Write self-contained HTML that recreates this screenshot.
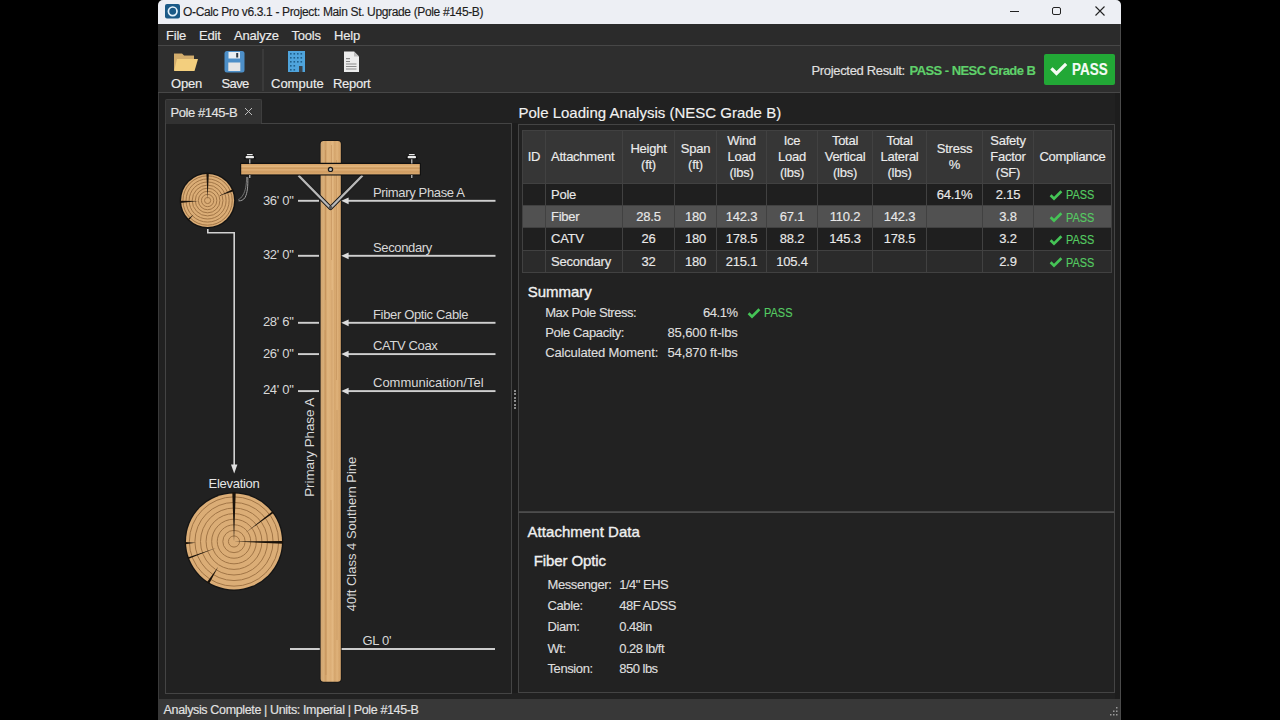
<!DOCTYPE html>
<html><head><meta charset="utf-8">
<style>
html,body{margin:0;padding:0;background:#000;width:1280px;height:720px;overflow:hidden;}
body{position:relative;font-family:"Liberation Sans",sans-serif;color:#e6e6e6;-webkit-text-stroke:0.15px currentColor;}
.a{position:absolute;}
.t{position:absolute;white-space:nowrap;line-height:1;}
.menu{font-size:13px;color:#ececec;letter-spacing:-0.2px;}
.tb{font-size:13px;color:#ececec;}
.cell{display:flex;align-items:center;text-align:center;font-size:13px;line-height:15.7px;color:#e8e8e8;box-sizing:border-box;white-space:nowrap;letter-spacing:-0.25px;}
.hd{background:#363636;color:#ececec;}
.sb{-webkit-text-stroke:0.35px currentColor;}
.sh{font-size:15px;color:#f0f0f0;}
.sm{font-size:13px;color:#dedede;}
.grn{color:#55cb62;}
</style></head><body>
<div class="a" style="left:158px;top:0px;width:963px;height:720px;background:#212121;border-top-left-radius:5px;border-top-right-radius:5px;"></div>
<div class="a" style="left:158px;top:0px;width:963px;height:24px;background:#edeff4;border-top-left-radius:5px;border-top-right-radius:5px;"></div>
<svg class="a" style="left:165px;top:4px" width="15" height="15" viewBox="0 0 15 15"><rect x="0" y="0" width="15" height="14.5" rx="2" fill="#1b5a87"/><circle cx="7.7" cy="7.3" r="4.3" fill="none" stroke="#e6f3fc" stroke-width="1.7"/></svg>
<div class="t " style="left:183px;top:5.84px;font-size:12px;color:#1d1d1d;letter-spacing:-0.35px;">O-Calc Pro v6.3.1 - Project: Main St. Upgrade (Pole #145-B)</div>
<div class="a" style="left:1010px;top:10.6px;width:9.2px;height:1.2px;background:#222;"></div>
<div class="a" style="left:1052px;top:6.5px;width:6.6px;height:6.6px;border:1.6px solid #222;border-radius:2px;"></div>
<svg class="a" style="left:1094px;top:5px" width="12" height="12"><path d="M1.5 1.5L10.5 10.5M10.5 1.5L1.5 10.5" stroke="#222" stroke-width="1.1"/></svg>
<div class="a" style="left:158px;top:24px;width:963px;height:21px;background:#2b2b2b;"></div>
<div class="t menu" style="left:166px;top:29.00px;font-size:13px;">File</div>
<div class="t menu" style="left:199px;top:29.00px;font-size:13px;">Edit</div>
<div class="t menu" style="left:234px;top:29.00px;font-size:13px;">Analyze</div>
<div class="t menu" style="left:291.5px;top:29.00px;font-size:13px;">Tools</div>
<div class="t menu" style="left:334px;top:29.00px;font-size:13px;">Help</div>
<div class="a" style="left:158px;top:45px;width:963px;height:48px;background:#2e2e2e;border-top:1px solid #474747;border-bottom:1px solid #474747;box-sizing:border-box;"></div>
<div class="a" style="left:158px;top:699px;width:963px;height:21px;background:#383838;"></div>
<div class="a" style="left:158px;top:93px;width:1px;height:607px;background:#3a3a3a;"></div>
<div class="a" style="left:165px;top:99px;width:95px;height:24px;background:#323232;border:1px solid #3e3e3e;border-bottom:none;border-radius:2px 2px 0 0;"></div>
<div class="t " style="left:170.5px;top:106.20px;font-size:13px;color:#e4e4e4;letter-spacing:-0.45px;">Pole #145-B</div>
<svg class="a" style="left:243px;top:106px" width="11" height="11"><path d="M2 2L9 9M9 2L2 9" stroke="#bdbdbd" stroke-width="1"/></svg>
<div class="a" style="left:165px;top:123px;width:345px;height:569px;background:#212121;border:1px solid #444;"></div>
<div class="a" style="left:166px;top:123px;width:95px;height:1px;background:#323232;"></div>
<div class="a" style="left:512px;top:123px;width:6px;height:570px;background:#1c1c1c;"></div>
<div class="a" style="left:514px;top:390px;width:2px;height:20px;background:repeating-linear-gradient(#8a8a8a 0 2px,transparent 2px 3.5px);"></div>
<div class="t " style="left:518.5px;top:105.30px;font-size:15px;color:#f2f2f2;">Pole Loading Analysis (NESC Grade B)</div>
<div class="a" style="left:518px;top:124px;width:597px;height:388px;background:#222222;border:1px solid #444;box-sizing:border-box;"></div>
<div class="a" style="left:518px;top:512px;width:597px;height:181px;background:#222222;border:1px solid #444;border-top:1.5px solid #4d4d4d;box-sizing:border-box;"></div>
<div class="a" style="left:1115px;top:93px;width:5px;height:606px;background:#1d1d1d;"></div>
<div class="a" style="left:1120px;top:24px;width:1px;height:696px;background:#4a4a4a;"></div>
<svg class="a" style="left:170px;top:49px" width="32" height="26" viewBox="0 0 32 26">
  <path d="M4 4.5 h8 l2 2 h10 v3 H4z" fill="#c9a466"/>
  <path d="M4 5 h8 l2 2 h10 v14 H4z" fill="#d3ad6c"/>
  <path d="M7 10 h21 l-3.5 12 H4z" fill="#f3cf7e"/>
</svg>
<svg class="a" style="left:223px;top:49px" width="24" height="26" viewBox="0 0 24 26">
  <rect x="1.5" y="2" width="20" height="21.5" rx="2.5" fill="#4d8fc8"/>
  <rect x="5.5" y="3" width="11.5" height="6.5" fill="#e9eef2"/>
  <rect x="13.2" y="4" width="2" height="4.5" fill="#2f3a44"/>
  <rect x="5.3" y="13.5" width="12" height="8.5" fill="#e6e6e6"/>
</svg>
<svg class="a" style="left:286px;top:49px" width="22" height="26" viewBox="0 0 22 26">
  <rect x="2" y="2" width="17" height="21" fill="#4fa4dc"/>
  <g fill="#1f5f8c"><rect x="4.0" y="4" width="1.6" height="1.6"/><rect x="7.5" y="4" width="1.6" height="1.6"/><rect x="11.0" y="4" width="1.6" height="1.6"/><rect x="14.5" y="4" width="1.6" height="1.6"/><rect x="4.0" y="8" width="1.6" height="1.6"/><rect x="7.5" y="8" width="1.6" height="1.6"/><rect x="11.0" y="8" width="1.6" height="1.6"/><rect x="14.5" y="8" width="1.6" height="1.6"/><rect x="4.0" y="12" width="1.6" height="1.6"/><rect x="7.5" y="12" width="1.6" height="1.6"/><rect x="11.0" y="12" width="1.6" height="1.6"/><rect x="14.5" y="12" width="1.6" height="1.6"/><rect x="4.0" y="16" width="1.6" height="1.6"/><rect x="7.5" y="16" width="1.6" height="1.6"/><rect x="4.0" y="20" width="1.6" height="1.6"/><rect x="7.5" y="20" width="1.6" height="1.6"/></g>
  <rect x="13" y="17" width="3.5" height="6" fill="#39434c"/>
</svg>
<svg class="a" style="left:341px;top:49px" width="20" height="26" viewBox="0 0 20 26">
  <path d="M3 2.5 h10 l5 5 V23 H3z" fill="#ececec"/>
  <path d="M13 2.5 v5 h5z" fill="#bdbdbd"/>
  <g fill="#8a8a8a"><rect x="5" y="9" width="4" height="1.2"/><rect x="5" y="12" width="4" height="1"/><rect x="5" y="14.5" width="10.5" height="1"/><rect x="5" y="17" width="10.5" height="1"/><rect x="5" y="19.5" width="10.5" height="1"/></g>
</svg>
<div class="a" style="left:262px;top:49px;width:2px;height:42px;background:#3a3a3a;"></div>
<div class="t tb" style="left:171px;top:77.00px;font-size:13px;letter-spacing:-0.2px;">Open</div>
<div class="t tb" style="left:221.5px;top:77.00px;font-size:13px;letter-spacing:-0.6px;">Save</div>
<div class="t tb" style="left:271px;top:77.00px;font-size:13px;">Compute</div>
<div class="t tb" style="left:333px;top:77.00px;font-size:13px;letter-spacing:-0.3px;">Report</div>
<div class="t " style="left:811.5px;top:63.70px;font-size:13px;color:#e0e0e0;letter-spacing:-0.33px;">Projected Result:</div>
<div class="t " style="left:909.5px;top:63.70px;font-size:13px;color:#5fd06a;letter-spacing:-0.55px;font-weight:bold;">PASS - NESC Grade B</div>
<div class="a" style="left:1044px;top:54px;width:71px;height:31px;background:#22a836;border-radius:2px;"></div>
<svg class="a" style="left:1050px;top:62px" width="18" height="15" viewBox="0 0 18 15"><path d="M2.5 7.5 L6.5 11.5 L15 3" fill="none" stroke="#f4fbf4" stroke-width="3.2" stroke-linecap="square"/></svg>
<div class="t " style="left:1071.5px;top:61.86px;font-size:16px;color:#f4fbf4;font-weight:bold;transform:scaleX(0.84);transform-origin:left top;">PASS</div>

<svg class="a" style="left:0;top:0" width="1280" height="720" viewBox="0 0 1280 720">
<defs>
<linearGradient id="pg" x1="0" x2="1" y1="0" y2="0">
 <stop offset="0" stop-color="#cfa470"/><stop offset="0.15" stop-color="#d8ae78"/><stop offset="0.25" stop-color="#cf9f66"/>
 <stop offset="0.35" stop-color="#e0b57e"/><stop offset="0.5" stop-color="#dcae76"/><stop offset="0.6" stop-color="#e3b882"/>
 <stop offset="0.7" stop-color="#d4a46b"/><stop offset="0.82" stop-color="#dfb27a"/><stop offset="0.92" stop-color="#d5a56c"/><stop offset="1" stop-color="#dcab72"/>
</linearGradient>
<linearGradient id="cg" x1="0" x2="0" y1="0" y2="1">
 <stop offset="0" stop-color="#d39f64"/><stop offset="0.25" stop-color="#e2b57c"/><stop offset="0.4" stop-color="#c99559"/>
 <stop offset="0.55" stop-color="#dfb078"/><stop offset="0.75" stop-color="#cf9b60"/><stop offset="1" stop-color="#dcab70"/>
</linearGradient>
</defs>
<circle cx="207.6" cy="200.5" r="28.0" fill="#141414"/>
<circle cx="207.6" cy="200.5" r="26.5" fill="#dbad76"/>
<circle cx="207.6" cy="200.5" r="3.08" fill="none" stroke="#a17546" stroke-width="1.0"/>
<circle cx="207.6" cy="200.5" r="6.16" fill="none" stroke="#a17546" stroke-width="1.0"/>
<circle cx="207.6" cy="200.5" r="9.24" fill="none" stroke="#a17546" stroke-width="1.0"/>
<circle cx="207.6" cy="200.5" r="12.33" fill="none" stroke="#a17546" stroke-width="1.0"/>
<circle cx="207.6" cy="200.5" r="15.41" fill="none" stroke="#a17546" stroke-width="1.0"/>
<circle cx="207.6" cy="200.5" r="18.49" fill="none" stroke="#a17546" stroke-width="1.0"/>
<circle cx="207.6" cy="200.5" r="21.57" fill="none" stroke="#a17546" stroke-width="1.0"/>
<circle cx="207.6" cy="200.5" r="24.65" fill="none" stroke="#a17546" stroke-width="1.0"/>
<path d="M207.60 199.18 L208.80 173.00 L206.40 173.00Z" fill="#1a120a"/>
<path d="M218.66 196.03 L233.47 191.13 L232.72 189.27Z" fill="#1a120a"/>
<path d="M198.34 200.99 L180.08 200.84 L180.20 203.04Z" fill="#1a120a"/>
<path d="M193.55 214.55 L187.52 219.31 L188.79 220.58Z" fill="#1a120a"/>
<path d="M247.8 177 C248 186 247.5 193 245 197.5 C243.5 200 241 201 238.5 200.8" fill="none" stroke="#a0a0a0" stroke-width="1"/>
<path d="M246.6 177 C246.5 185 245.5 191 243 195 C241.5 197.5 240 199 238.3 199.5" fill="none" stroke="#8a8a8a" stroke-width="0.8"/>
<path d="M207.8 229 V232.8 H234.2 V466" fill="none" stroke="#d2d2d2" stroke-width="1.6"/>
<path d="M231 464.5 L237.4 464.5 L234.2 473.5Z" fill="#e0e0e0"/>
<text x="234" y="487.5" font-size="13" fill="#e6e6e6" text-anchor="middle" font-family="Liberation Sans" letter-spacing="-0.3">Elevation</text>
<circle cx="234" cy="541.5" r="49.3" fill="#141414"/>
<circle cx="234" cy="541.5" r="48" fill="#dbad76"/>
<circle cx="234" cy="541.5" r="5.58" fill="none" stroke="#a17546" stroke-width="1.0"/>
<circle cx="234" cy="541.5" r="11.16" fill="none" stroke="#a17546" stroke-width="1.0"/>
<circle cx="234" cy="541.5" r="16.74" fill="none" stroke="#a17546" stroke-width="1.0"/>
<circle cx="234" cy="541.5" r="22.33" fill="none" stroke="#a17546" stroke-width="1.0"/>
<circle cx="234" cy="541.5" r="27.91" fill="none" stroke="#a17546" stroke-width="1.0"/>
<circle cx="234" cy="541.5" r="33.49" fill="none" stroke="#a17546" stroke-width="1.0"/>
<circle cx="234" cy="541.5" r="39.07" fill="none" stroke="#a17546" stroke-width="1.0"/>
<circle cx="234" cy="541.5" r="44.65" fill="none" stroke="#a17546" stroke-width="1.0"/>
<path d="M234.00 541.50 L235.70 492.50 L232.30 492.50Z" fill="#1a120a"/>
<path d="M245.50 532.83 L273.67 512.73 L272.59 511.29Z" fill="#1a120a"/>
<path d="M234.00 541.50 L282.97 543.65 L283.02 541.06Z" fill="#1a120a"/>
<path d="M195.62 542.84 L184.99 542.11 L185.07 544.31Z" fill="#1a120a"/>
<path d="M215.96 548.07 L187.72 557.60 L188.19 558.92Z" fill="#1a120a"/>
<path d="M218.23 566.74 L206.93 582.37 L209.14 583.74Z" fill="#1a120a"/>
<rect x="290" y="648" width="205" height="2" fill="#cdcdcd"/>
<rect x="319.8" y="140.2" width="21.8" height="542.4" rx="3.5" fill="#141414"/>
<rect x="320.6" y="141" width="20.2" height="540.8" rx="3" fill="url(#pg)"/>
<g stroke="#b98550" stroke-width="0.8" opacity="0.55" fill="none">
<path d="M325.5 150 V300 M325 330 V520 M326 560 V675"/>
<path d="M331.5 145 V260 M332 290 V470 M331 500 V600"/>
<path d="M336.5 160 V380 M337 410 V640"/>
</g>
<path d="M298.5 175.5 L330.5 208 L362.5 175.5" fill="none" stroke="#1a1a1a" stroke-width="4.2" stroke-linejoin="round"/>
<path d="M298.5 175.5 L330.5 208 L362.5 175.5" fill="none" stroke="#b8b8b8" stroke-width="2.4" stroke-linejoin="round"/>
<circle cx="330.5" cy="207.5" r="1.8" fill="#555"/>
<rect x="240" y="162.8" width="181" height="12.8" rx="1.2" fill="#111"/>
<rect x="241.2" y="164" width="178.6" height="10.4" fill="url(#cg)"/>
<circle cx="330.5" cy="169.4" r="2.7" fill="#1a1a1a"/>
<circle cx="330.5" cy="169.4" r="1.5" fill="#bdbdbd"/>
<rect x="248.5" y="158.5" width="2.6" height="5" fill="#151515"/>
<rect x="249.20000000000002" y="158.5" width="1.2" height="5" fill="#cfcfcf"/>
<path d="M243.5 159.2 L245.8 154.5 Q249.8 152.3 253.8 154.5 L256.1 159.2Z" fill="#141414"/>
<rect x="246.8" y="154" width="6" height="1.3" rx="0.6" fill="#e8e8e8"/>
<rect x="245.60000000000002" y="156.1" width="8.4" height="2.1" rx="0.8" fill="#ececec"/>
<rect x="248.60000000000002" y="175" width="2.4" height="3.6" rx="1" fill="#141414"/>
<rect x="249.20000000000002" y="175" width="1.2" height="3" fill="#cfcfcf"/>
<rect x="410.5" y="158.5" width="2.6" height="5" fill="#151515"/>
<rect x="411.2" y="158.5" width="1.2" height="5" fill="#cfcfcf"/>
<path d="M405.5 159.2 L407.8 154.5 Q411.8 152.3 415.8 154.5 L418.1 159.2Z" fill="#141414"/>
<rect x="408.8" y="154" width="6" height="1.3" rx="0.6" fill="#e8e8e8"/>
<rect x="407.6" y="156.1" width="8.4" height="2.1" rx="0.8" fill="#ececec"/>
<rect x="410.6" y="175" width="2.4" height="3.6" rx="1" fill="#141414"/>
<rect x="411.2" y="175" width="1.2" height="3" fill="#cfcfcf"/>
<g fill="#d8d8d8" font-family="Liberation Sans" font-size="13">
<rect x="298" y="199.85" width="21" height="1.9" fill="#cfcfcf"/>
<rect x="346" y="199.85" width="149.5" height="1.9" fill="#cfcfcf"/>
<path d="M341.3 200.80 L348.6 197.40 L348.6 204.20Z" fill="#dcdcdc"/>
<text x="293.5" y="205.2" text-anchor="end" letter-spacing="-0.3">36' 0&quot;</text>
<text x="373" y="197.3" letter-spacing="-0.35">Primary Phase A</text>
<rect x="298" y="254.85" width="21" height="1.9" fill="#cfcfcf"/>
<rect x="346" y="254.85" width="149.5" height="1.9" fill="#cfcfcf"/>
<path d="M341.3 255.80 L348.6 252.40 L348.6 259.20Z" fill="#dcdcdc"/>
<text x="293.5" y="259.0" text-anchor="end" letter-spacing="-0.3">32' 0&quot;</text>
<text x="373" y="251.8" letter-spacing="-0.35">Secondary</text>
<rect x="298" y="321.85" width="21" height="1.9" fill="#cfcfcf"/>
<rect x="346" y="321.85" width="149.5" height="1.9" fill="#cfcfcf"/>
<path d="M341.3 322.80 L348.6 319.40 L348.6 326.20Z" fill="#dcdcdc"/>
<text x="293.5" y="325.9" text-anchor="end" letter-spacing="-0.3">28' 6&quot;</text>
<text x="373" y="319.2" letter-spacing="-0.35">Fiber Optic Cable</text>
<rect x="298" y="353.15" width="21" height="1.9" fill="#cfcfcf"/>
<rect x="346" y="353.15" width="149.5" height="1.9" fill="#cfcfcf"/>
<path d="M341.3 354.10 L348.6 350.70 L348.6 357.50Z" fill="#dcdcdc"/>
<text x="293.5" y="357.6" text-anchor="end" letter-spacing="-0.3">26' 0&quot;</text>
<text x="373" y="350.3" letter-spacing="-0.35">CATV Coax</text>
<rect x="298" y="390.15" width="21" height="1.9" fill="#cfcfcf"/>
<rect x="346" y="390.15" width="149.5" height="1.9" fill="#cfcfcf"/>
<path d="M341.3 391.10 L348.6 387.70 L348.6 394.50Z" fill="#dcdcdc"/>
<text x="293.5" y="393.5" text-anchor="end" letter-spacing="-0.3">24' 0&quot;</text>
<text x="373" y="387.0" letter-spacing="0">Communication/Tel</text>

<text x="362.5" y="645.3" letter-spacing="-0.3">GL 0'</text>
<text transform="translate(314 447.3) rotate(-90)" text-anchor="middle" font-size="13.5" letter-spacing="-0.1">Primary Phase A</text>
<text transform="translate(356 534) rotate(-90)" text-anchor="middle" letter-spacing="0">40ft Class 4 Southern Pine</text>
</g>
</svg>

<div class="a" style="left:522px;top:130px;width:590px;height:143px;background:#414141;"></div>
<div class="a cell hd" style="left:523px;top:131px;width:22px;height:52px;justify-content:center;">ID</div>
<div class="a cell hd" style="left:546px;top:131px;width:76px;height:52px;justify-content:flex-start;padding-left:5px;">Attachment</div>
<div class="a cell hd" style="left:623px;top:131px;width:51px;height:52px;justify-content:center;">Height<br>(ft)</div>
<div class="a cell hd" style="left:675px;top:131px;width:41px;height:52px;justify-content:center;">Span<br>(ft)</div>
<div class="a cell hd" style="left:717px;top:131px;width:49px;height:52px;justify-content:center;">Wind<br>Load<br>(lbs)</div>
<div class="a cell hd" style="left:767px;top:131px;width:50px;height:52px;justify-content:center;">Ice<br>Load<br>(lbs)</div>
<div class="a cell hd" style="left:818px;top:131px;width:54px;height:52px;justify-content:center;">Total<br>Vertical<br>(lbs)</div>
<div class="a cell hd" style="left:873px;top:131px;width:53px;height:52px;justify-content:center;">Total<br>Lateral<br>(lbs)</div>
<div class="a cell hd" style="left:927px;top:131px;width:55px;height:52px;justify-content:center;">Stress<br>%</div>
<div class="a cell hd" style="left:983px;top:131px;width:50px;height:52px;justify-content:center;">Safety<br>Factor<br>(SF)</div>
<div class="a cell hd" style="left:1034px;top:131px;width:77px;height:52px;justify-content:center;">Compliance</div>
<div class="a cell" style="left:523px;top:184px;width:22px;height:21px;background:#1f1f1f;justify-content:center;"></div>
<div class="a cell" style="left:546px;top:184px;width:76px;height:21px;background:#1f1f1f;justify-content:flex-start;padding-left:5px;">Pole</div>
<div class="a cell" style="left:623px;top:184px;width:51px;height:21px;background:#1f1f1f;justify-content:center;"></div>
<div class="a cell" style="left:675px;top:184px;width:41px;height:21px;background:#1f1f1f;justify-content:center;"></div>
<div class="a cell" style="left:717px;top:184px;width:49px;height:21px;background:#1f1f1f;justify-content:center;"></div>
<div class="a cell" style="left:767px;top:184px;width:50px;height:21px;background:#1f1f1f;justify-content:center;"></div>
<div class="a cell" style="left:818px;top:184px;width:54px;height:21px;background:#1f1f1f;justify-content:center;"></div>
<div class="a cell" style="left:873px;top:184px;width:53px;height:21px;background:#1f1f1f;justify-content:center;"></div>
<div class="a cell" style="left:927px;top:184px;width:55px;height:21px;background:#1f1f1f;justify-content:center;">64.1%</div>
<div class="a cell" style="left:983px;top:184px;width:50px;height:21px;background:#1f1f1f;justify-content:center;">2.15</div>
<div class="a cell" style="left:1034px;top:184px;width:77px;height:21px;background:#1f1f1f;justify-content:center;"></div>
<svg class="a" style="left:1048.5px;top:188.9px" width="14" height="12" viewBox="0 0 14 12"><path d="M1.6 6.3L5 9.6L12.4 2.2" fill="none" stroke="#45c456" stroke-width="2.7"/></svg>
<div class="t grn" style="left:1066px;top:188.40px;font-size:13px;transform:scaleX(0.84);transform-origin:left top;">PASS</div>
<div class="a cell" style="left:523px;top:206px;width:22px;height:21px;background:#515151;justify-content:center;"></div>
<div class="a cell" style="left:546px;top:206px;width:76px;height:21px;background:#515151;justify-content:flex-start;padding-left:5px;">Fiber</div>
<div class="a cell" style="left:623px;top:206px;width:51px;height:21px;background:#515151;justify-content:center;">28.5</div>
<div class="a cell" style="left:675px;top:206px;width:41px;height:21px;background:#515151;justify-content:center;">180</div>
<div class="a cell" style="left:717px;top:206px;width:49px;height:21px;background:#515151;justify-content:center;">142.3</div>
<div class="a cell" style="left:767px;top:206px;width:50px;height:21px;background:#515151;justify-content:center;">67.1</div>
<div class="a cell" style="left:818px;top:206px;width:54px;height:21px;background:#515151;justify-content:center;">110.2</div>
<div class="a cell" style="left:873px;top:206px;width:53px;height:21px;background:#515151;justify-content:center;">142.3</div>
<div class="a cell" style="left:927px;top:206px;width:55px;height:21px;background:#515151;justify-content:center;"></div>
<div class="a cell" style="left:983px;top:206px;width:50px;height:21px;background:#515151;justify-content:center;">3.8</div>
<div class="a cell" style="left:1034px;top:206px;width:77px;height:21px;background:#515151;justify-content:center;"></div>
<svg class="a" style="left:1048.5px;top:211.2px" width="14" height="12" viewBox="0 0 14 12"><path d="M1.6 6.3L5 9.6L12.4 2.2" fill="none" stroke="#45c456" stroke-width="2.7"/></svg>
<div class="t grn" style="left:1066px;top:210.70px;font-size:13px;transform:scaleX(0.84);transform-origin:left top;">PASS</div>
<div class="a cell" style="left:523px;top:228px;width:22px;height:22px;background:#1f1f1f;justify-content:center;"></div>
<div class="a cell" style="left:546px;top:228px;width:76px;height:22px;background:#1f1f1f;justify-content:flex-start;padding-left:5px;">CATV</div>
<div class="a cell" style="left:623px;top:228px;width:51px;height:22px;background:#1f1f1f;justify-content:center;">26</div>
<div class="a cell" style="left:675px;top:228px;width:41px;height:22px;background:#1f1f1f;justify-content:center;">180</div>
<div class="a cell" style="left:717px;top:228px;width:49px;height:22px;background:#1f1f1f;justify-content:center;">178.5</div>
<div class="a cell" style="left:767px;top:228px;width:50px;height:22px;background:#1f1f1f;justify-content:center;">88.2</div>
<div class="a cell" style="left:818px;top:228px;width:54px;height:22px;background:#1f1f1f;justify-content:center;">145.3</div>
<div class="a cell" style="left:873px;top:228px;width:53px;height:22px;background:#1f1f1f;justify-content:center;">178.5</div>
<div class="a cell" style="left:927px;top:228px;width:55px;height:22px;background:#1f1f1f;justify-content:center;"></div>
<div class="a cell" style="left:983px;top:228px;width:50px;height:22px;background:#1f1f1f;justify-content:center;">3.2</div>
<div class="a cell" style="left:1034px;top:228px;width:77px;height:22px;background:#1f1f1f;justify-content:center;"></div>
<svg class="a" style="left:1048.5px;top:233.8px" width="14" height="12" viewBox="0 0 14 12"><path d="M1.6 6.3L5 9.6L12.4 2.2" fill="none" stroke="#45c456" stroke-width="2.7"/></svg>
<div class="t grn" style="left:1066px;top:233.30px;font-size:13px;transform:scaleX(0.84);transform-origin:left top;">PASS</div>
<div class="a cell" style="left:523px;top:251px;width:22px;height:21px;background:#2b2b2b;justify-content:center;"></div>
<div class="a cell" style="left:546px;top:251px;width:76px;height:21px;background:#2b2b2b;justify-content:flex-start;padding-left:5px;">Secondary</div>
<div class="a cell" style="left:623px;top:251px;width:51px;height:21px;background:#2b2b2b;justify-content:center;">32</div>
<div class="a cell" style="left:675px;top:251px;width:41px;height:21px;background:#2b2b2b;justify-content:center;">180</div>
<div class="a cell" style="left:717px;top:251px;width:49px;height:21px;background:#2b2b2b;justify-content:center;">215.1</div>
<div class="a cell" style="left:767px;top:251px;width:50px;height:21px;background:#2b2b2b;justify-content:center;">105.4</div>
<div class="a cell" style="left:818px;top:251px;width:54px;height:21px;background:#2b2b2b;justify-content:center;"></div>
<div class="a cell" style="left:873px;top:251px;width:53px;height:21px;background:#2b2b2b;justify-content:center;"></div>
<div class="a cell" style="left:927px;top:251px;width:55px;height:21px;background:#2b2b2b;justify-content:center;"></div>
<div class="a cell" style="left:983px;top:251px;width:50px;height:21px;background:#2b2b2b;justify-content:center;">2.9</div>
<div class="a cell" style="left:1034px;top:251px;width:77px;height:21px;background:#2b2b2b;justify-content:center;"></div>
<svg class="a" style="left:1048.5px;top:256.1px" width="14" height="12" viewBox="0 0 14 12"><path d="M1.6 6.3L5 9.6L12.4 2.2" fill="none" stroke="#45c456" stroke-width="2.7"/></svg>
<div class="t grn" style="left:1066px;top:255.60px;font-size:13px;transform:scaleX(0.84);transform-origin:left top;">PASS</div>
<div class="t sh sb" style="left:527.7px;top:283.80px;font-size:15px;">Summary</div>
<div class="t sm" style="left:545.2px;top:306.20px;font-size:13px;letter-spacing:-0.45px;">Max Pole Stress:</div>
<div class="t sm" style="left:545.2px;top:326.30px;font-size:13px;letter-spacing:-0.35px;">Pole Capacity:</div>
<div class="t sm" style="left:545.2px;top:346.00px;font-size:13px;letter-spacing:-0.15px;">Calculated Moment:</div>
<div class="t sm" style="left:537.7px;width:200px;text-align:right;top:306.20px;font-size:13px;letter-spacing:-0.45px;">64.1%</div>
<div class="t sm" style="left:537.7px;width:200px;text-align:right;top:326.30px;font-size:13px;letter-spacing:-0.1px;">85,600 ft-lbs</div>
<div class="t sm" style="left:537.7px;width:200px;text-align:right;top:346.00px;font-size:13px;letter-spacing:-0.1px;">54,870 ft-lbs</div>
<svg class="a" style="left:746.5px;top:306.5px" width="14" height="12" viewBox="0 0 14 12"><path d="M1.6 6.3L5 9.6L12.4 2.2" fill="none" stroke="#45c456" stroke-width="2.7"/></svg>
<div class="t grn" style="left:764px;top:305.89px;font-size:13.6px;transform:scaleX(0.81);transform-origin:left top;">PASS</div>
<div class="t sh sb" style="left:527.5px;top:524.20px;font-size:15px;letter-spacing:0.05px;">Attachment Data</div>
<div class="t sh sb" style="left:533.75px;top:552.90px;font-size:15px;letter-spacing:-0.1px;">Fiber Optic</div>
<div class="t sm" style="left:547.5px;top:578.20px;font-size:13px;letter-spacing:-0.4px;">Messenger:</div>
<div class="t sm" style="left:619.2px;top:578.20px;font-size:13px;letter-spacing:-0.5px;">1/4" EHS</div>
<div class="t sm" style="left:547.5px;top:599.00px;font-size:13px;letter-spacing:-0.4px;">Cable:</div>
<div class="t sm" style="left:619.2px;top:599.00px;font-size:13px;letter-spacing:-0.5px;">48F ADSS</div>
<div class="t sm" style="left:547.5px;top:620.30px;font-size:13px;letter-spacing:-0.4px;">Diam:</div>
<div class="t sm" style="left:619.2px;top:620.30px;font-size:13px;letter-spacing:-0.5px;">0.48in</div>
<div class="t sm" style="left:547.5px;top:641.50px;font-size:13px;letter-spacing:-0.4px;">Wt:</div>
<div class="t sm" style="left:619.2px;top:641.50px;font-size:13px;letter-spacing:-0.5px;">0.28 lb/ft</div>
<div class="t sm" style="left:547.5px;top:662.30px;font-size:13px;letter-spacing:-0.4px;">Tension:</div>
<div class="t sm" style="left:619.2px;top:662.30px;font-size:13px;letter-spacing:-0.5px;">850 lbs</div>
<div class="t " style="left:163.6px;top:704.42px;font-size:12.5px;color:#e2e2e2;letter-spacing:-0.36px;">Analysis Complete | Units: Imperial | Pole #145-B</div>
<svg class="a" style="left:1108px;top:706px" width="11" height="12"><g fill="#9a9a9a"><rect x="8" y="1" width="1.5" height="1.5"/><rect x="5" y="4.5" width="1.5" height="1.5"/><rect x="8" y="4.5" width="1.5" height="1.5"/><rect x="2" y="8" width="1.5" height="1.5"/><rect x="5" y="8" width="1.5" height="1.5"/><rect x="8" y="8" width="1.5" height="1.5"/></g></svg>
</body></html>
